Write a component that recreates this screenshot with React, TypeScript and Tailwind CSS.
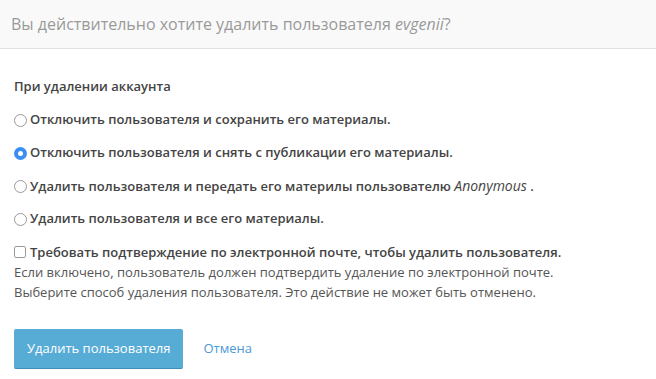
import React, { useState } from "react";

const options = [
    { id: "keep", label: "Отключить пользователя и сохранить его материалы." },
    { id: "unpublish", label: "Отключить пользователя и снять с публикации его материалы." },
    { id: "reassign", label: "Удалить пользователя и передать его материлы пользователю ", extra: "Anonymous" },
    { id: "delete", label: "Удалить пользователя и все его материалы." },
];

export default function App() {
    const [method, setMethod] = useState("unpublish");
    const [confirm, setConfirm] = useState(false);

    return (
        <div className="w-[656px] h-[379px] bg-white font-['Open_Sans',sans-serif] text-[#333]">
            <div className="h-[49px] bg-[#f9f9f9] border-b border-[#e2e2e2] pl-[11px] flex items-center">
                <h1 className="text-[16px] text-[#999]">
                    Вы действительно хотите удалить пользователя <em>evgenii</em>?
                </h1>
            </div>

            <div className="px-[14px] pt-[28px]">
                <div className="text-[13px] font-semibold text-[#444]">При удалении аккаунта</div>

                <div className="mt-[14px] flex flex-col gap-[14px]">
                    {options.map((o) => (
                        <label key={o.id} className="flex items-center gap-[3px] h-[19px] text-[13px] font-semibold text-[#444] cursor-pointer">
                            <span
                                onClick={() => setMethod(o.id)}
                                className={
                                    method === o.id
                                        ? "w-[13px] h-[13px] rounded-full bg-[#3b8ff2] flex items-center justify-center"
                                        : "w-[13px] h-[13px] rounded-full border border-[#9a9a9a] bg-white"
                                }
                            >
                                {method === o.id && <span className="w-[5px] h-[5px] rounded-full bg-white" />}
                            </span>
                            <span onClick={() => setMethod(o.id)}>
                                {o.label}
                                {o.extra && <em className="text-[14px] font-normal">{o.extra}</em>}
                                {o.extra && " ."}
                            </span>
                        </label>
                    ))}
                </div>

                <label className="mt-[14px] flex items-center gap-[4px] text-[13px] font-semibold text-[#444] cursor-pointer" onClick={() => setConfirm(!confirm)}>
                    <span className="w-[12px] h-[12px] rounded-[2px] border border-[#9a9a9a] bg-white" />
                    Требовать подтверждение по электронной почте, чтобы удалить пользователя.
                </label>
                <p className="text-[13px] leading-[20px] text-[#555]">
                    Если включено, пользователь должен подтвердить удаление по электронной почте.
                    <br />
                    Выберите способ удаления пользователя. Это действие не может быть отменено.
                </p>

                <div className="mt-[27px] flex items-center gap-[20px]">
                    <button className="h-[40px] px-[13px] rounded-[2px] bg-[#57acd6] border-b border-[#3f8fb9] text-white text-[13px]">
                        Удалить пользователя
                    </button>
                    <a href="#" className="text-[13px] text-[#4a9ad8]">Отмена</a>
                </div>
            </div>
        </div>
    );
}
